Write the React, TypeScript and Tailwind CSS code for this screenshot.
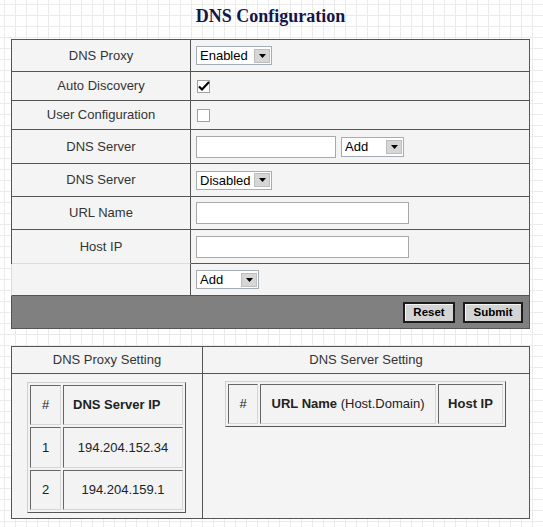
import React from 'react';

const FONT = "font-['Liberation_Sans',Arial,sans-serif]";

function FakeSelect({ value, width, height }: { value: string; width: string; height: string }) {
  return (
    <div className={`flex items-center border border-[#a5acb2] bg-white ${width} ${height}`}>
      <span className="flex-1 pl-[3px] text-[13px] leading-none text-black">{value}</span>
      <span className="mr-[1px] flex h-[14px] w-[16px] items-center justify-center border border-[#bdbdbd] bg-[#d6d6d6]">
        <svg width="7" height="4" viewBox="0 0 7 4">
          <path d="M0 0h7L3.5 4z" fill="#000" />
        </svg>
      </span>
    </div>
  );
}

function Checkbox({ checked }: { checked?: boolean }) {
  return (
    <div className="relative ml-[1px] h-[13px] w-[13px] border border-[#a0a0a0] bg-white">
      {checked && (
        <svg className="absolute left-[-1px] top-[-2px]" width="14" height="14" viewBox="0 0 14 14">
          <path d="M2 7.5l3 3L12 3" fill="none" stroke="#000" strokeWidth="2.2" />
        </svg>
      )}
    </div>
  );
}

function TextBox({ width }: { width: string }) {
  return <div className={`h-[22px] border border-[#a9a9a9] bg-white ${width}`} />;
}

function Row({
  label,
  height,
  children,
  last,
}: {
  label: string;
  height: string;
  children?: React.ReactNode;
  last?: boolean;
}) {
  return (
    <div className={`flex ${height}`}>
      <div
        className={`flex w-[179px] items-center justify-center border-r border-b border-r-[#555] text-[13px] text-[#333] ${
          last ? 'border-b-[#555]' : 'border-b-[#555]'
        }`}
      >
        {label}
      </div>
      <div className="flex flex-1 items-center gap-[5px] border-b border-[#555] pl-[5px]">{children}</div>
    </div>
  );
}

const cellIn = 'border border-t-[#666] border-l-[#666] border-b-[#d6d6d6] border-r-[#d6d6d6] bg-[#f3f3f3]';
const tableOut =
  'border-separate border-spacing-[2px] border border-t-[#d0d0d0] border-l-[#d0d0d0] border-b-[#555] border-r-[#555] bg-[#f3f3f3]';

export default function App() {
  return (
    <div
      className={`min-h-screen bg-white bg-[linear-gradient(to_right,#ebebeb_1px,transparent_1px),linear-gradient(to_bottom,#ebebeb_1px,transparent_1px)] bg-[length:11px_11px] bg-[position:4px_4px] ${FONT}`}
    >
      <div className="ml-[11px] w-[519px]">
        {/* Title */}
        <div className="flex h-[27px] justify-center pt-[5px]">
          <h1 className="font-['Liberation_Serif','Times_New_Roman',serif] text-[18px] font-bold leading-[22px] text-[#15154a]">
            DNS Configuration
          </h1>
        </div>

        {/* Main form */}
        <div className="mt-[12px] border border-[#555] bg-[#f4f4f4]">
          <Row label="DNS Proxy" height="h-[32px]">
            <FakeSelect value="Enabled" width="w-[76px]" height="h-[19px]" />
          </Row>
          <Row label="Auto Discovery" height="h-[29px]">
            <Checkbox checked />
          </Row>
          <Row label="User Configuration" height="h-[29px]">
            <Checkbox />
          </Row>
          <Row label="DNS Server" height="h-[34px]">
            <TextBox width="w-[140px]" />
            <FakeSelect value="Add" width="w-[63px]" height="h-[20px]" />
          </Row>
          <Row label="DNS Server" height="h-[33px]">
            <FakeSelect value="Disabled" width="w-[76px]" height="h-[19px]" />
          </Row>
          <Row label="URL Name" height="h-[33px]">
            <TextBox width="w-[213px]" />
          </Row>
          <div className="flex h-[34px]">
            <div className="flex w-[179px] items-center justify-center border-r border-b border-r-[#555] border-b-[#dcdcdc] text-[13px] text-[#333]">
              Host IP
            </div>
            <div className="flex flex-1 items-center border-b border-[#555] pl-[5px]">
              <TextBox width="w-[213px]" />
            </div>
          </div>
          <div className="-ml-[1px] flex h-[32px]">
            <div className="w-[180px] border-l border-r border-b border-l-[#dcdcdc] border-r-[#555] border-b-[#555]" />
            <div className="flex flex-1 items-center border-b border-[#555] pl-[5px]">
              <FakeSelect value="Add" width="w-[63px]" height="h-[19px]" />
            </div>
          </div>
          <div className="flex h-[32px] items-center justify-end gap-[8px] bg-[#808080] pr-[6px]">
            <button className="h-[21px] w-[52px] border-2 border-[#1c1c1c] bg-[#d4d4d4] text-[11.5px] font-bold text-black shadow-[inset_1px_1px_0_#f4f4f4]">
              Reset
            </button>
            <button className="h-[21px] w-[60px] border-2 border-[#1c1c1c] bg-[#d4d4d4] text-[11.5px] font-bold text-black shadow-[inset_1px_1px_0_#f4f4f4]">
              Submit
            </button>
          </div>
        </div>

        {/* Lists */}
        <div className="mt-[17px] border border-[#555] bg-[#f4f4f4]">
          <div className="flex h-[27px] border-b border-[#555] text-[13px] text-[#333]">
            <div className="flex w-[191px] items-center justify-center border-r border-[#555]">DNS Proxy Setting</div>
            <div className="flex flex-1 items-center justify-center">DNS Server Setting</div>
          </div>
          <div className="flex h-[144px]">
            <div className="w-[191px] border-r border-[#555] pl-[15px] pt-[8px]">
              <table className={`${tableOut} text-[13px] text-[#222]`}>
                <tbody>
                  <tr className="h-[40px]">
                    <td className={`${cellIn} w-[31px] text-center`}>#</td>
                    <td className={`${cellIn} w-[120px] pl-[9px] text-left font-bold`}>DNS Server IP</td>
                  </tr>
                  <tr className="h-[41px]">
                    <td className={`${cellIn} text-center`}>1</td>
                    <td className={`${cellIn} text-center`}>194.204.152.34</td>
                  </tr>
                  <tr className="h-[40px]">
                    <td className={`${cellIn} text-center`}>2</td>
                    <td className={`${cellIn} text-center`}>194.204.159.1</td>
                  </tr>
                </tbody>
              </table>
            </div>
            <div className="flex-1 pl-[22px] pt-[7px]">
              <table className={`${tableOut} text-[13px] text-[#222]`}>
                <tbody>
                  <tr className="h-[40px]">
                    <td className={`${cellIn} w-[30px] text-center`}>#</td>
                    <td className={`${cellIn} w-[176px] text-center`}>
                      <b>URL Name</b> (Host.Domain)
                    </td>
                    <td className={`${cellIn} w-[65px] text-center font-bold`}>Host IP</td>
                  </tr>
                </tbody>
              </table>
            </div>
          </div>
        </div>
      </div>
    </div>
  );
}
